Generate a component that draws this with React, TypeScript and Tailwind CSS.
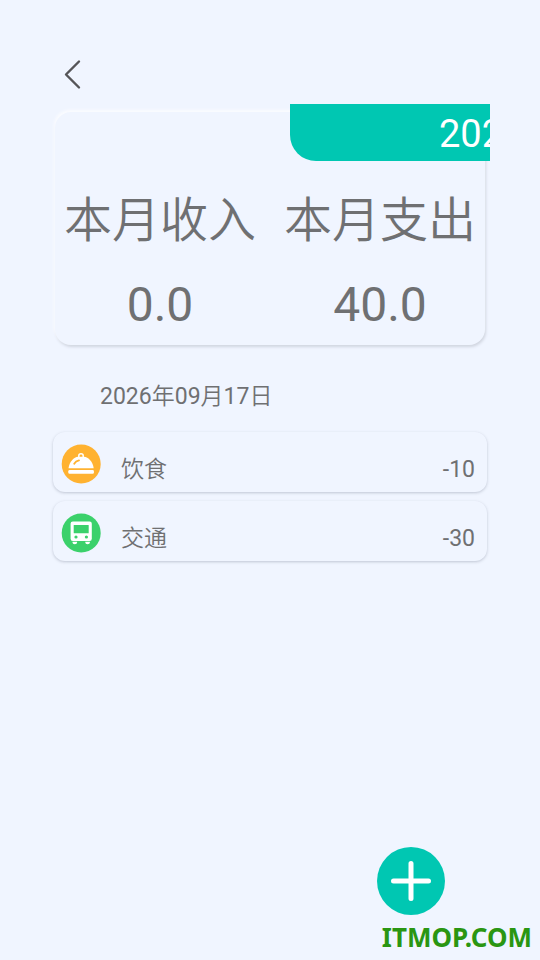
import type { ReactNode } from "react";

const fontStack = "font-['Roboto','Noto_Sans_CJK_SC_DemiLight','Noto_Sans_CJK_SC',sans-serif]";

function BackIcon() {
  return (
    <svg
      width="20"
      height="32"
      viewBox="0 0 20 32"
      fill="none"
      stroke="#555558"
      strokeWidth="2.4"
      strokeLinecap="round"
      strokeLinejoin="round"
      aria-hidden="true"
    >
      <path d="M17 3.5 4 16.5l13 13" />
    </svg>
  );
}

function FoodIcon() {
  return (
    <svg className="size-10" viewBox="0 0 40 40" aria-hidden="true">
      <circle cx="20.2" cy="20" r="19.5" fill="#ffb230" />
      <path d="M17.8 13.5v-1.7q0-2 2.2-2t2.2 2v1.7" fill="none" stroke="#fff" strokeWidth="1.5" />
      <path d="M7.5 24.3C8.3 18 13 12.8 17 12.8h6c4.4 0 8.9 5.2 9.7 11.5z" fill="#fff" />
      <path d="M13.2 19.8c1-1.8 2.6-3 4.8-3.4" fill="none" stroke="#ffb230" strokeWidth="1.8" strokeLinecap="round" />
      <rect x="7.3" y="26" width="25.6" height="3.8" rx="1.2" fill="#fff" />
    </svg>
  );
}

function BusIcon() {
  return (
    <svg className="size-10" viewBox="0 0 40 40" aria-hidden="true">
      <circle cx="20.2" cy="20" r="19.5" fill="#3bd16b" />
      <rect x="9.6" y="8.5" width="21.2" height="19.5" rx="2.2" fill="#fff" />
      <rect x="12.7" y="12" width="15" height="8.3" rx="0.5" fill="#3bd16b" />
      <circle cx="15" cy="24" r="1.6" fill="#3bd16b" />
      <circle cx="25.4" cy="24" r="1.6" fill="#3bd16b" />
      <path d="M11.5 28.8h4.6v.8a2.3 1.7 0 0 1-4.6 0zM24.3 28.8h4.6v.8a2.3 1.7 0 0 1-4.6 0z" fill="#fff" />
    </svg>
  );
}

function PlusIcon() {
  return (
    <svg width="40" height="40" viewBox="0 0 40 40" stroke="#fff" strokeWidth="5" strokeLinecap="round" aria-hidden="true">
      <path d="M20 2.5v35M2.5 20h35" />
    </svg>
  );
}

function Total({ label, value }: { label: string; value: string }) {
  return (
    <div className="flex flex-col items-center gap-7 text-5xl leading-14">
      <dt className="whitespace-nowrap">{label}</dt>
      <dd>{value}</dd>
    </div>
  );
}

function RecordRow({ icon, name, amount }: { icon: ReactNode; name: string; amount: string }) {
  return (
    <li className="flex h-15 items-center rounded-xl bg-[#f0f5ff] px-2 pt-1 shadow-[0_1px_3px_rgba(70,80,100,0.28)]">
      {icon}
      <span className="mt-3 ml-5 text-[23px] leading-8">{name}</span>
      <span className="mt-3 mr-1 ml-auto text-[23px] leading-8">{amount}</span>
    </li>
  );
}

const records = [
  { name: "饮食", amount: "-10", icon: <FoodIcon /> },
  { name: "交通", amount: "-30", icon: <BusIcon /> },
];

export default function App() {
  return (
    <div className={`flex min-h-screen flex-col bg-[#f0f5ff] text-[#6f7072] ${fontStack}`}>
      <header className="px-15 pt-14">
        <button type="button" aria-label="返回" className="flex h-9 w-6 items-center justify-center">
          <BackIcon />
        </button>
      </header>

      <main className="px-[50px] pt-3">
        <section className="grid">
          {/* raised panel behind the totals */}
          <div className="col-start-1 row-start-1 mx-[5px] mt-2 rounded-2xl bg-[#f0f5ff] shadow-[-1px_-2px_3px_#fbfcff,1px_2px_3px_#d0d5e0]" />
          <div className="col-start-1 row-start-1 pb-3">
            <button
              type="button"
              className="ml-auto flex h-[57px] w-[200px] items-center overflow-hidden rounded-bl-[26px] bg-[#00c7b2] pt-1 pl-[149px] text-[38px] whitespace-nowrap text-white"
            >
              2026
            </button>
            <dl className="mt-8 grid grid-cols-2">
              <Total label="本月收入" value="0.0" />
              <Total label="本月支出" value="40.0" />
            </dl>
          </div>
        </section>

        <h2 className="mt-[34px] ml-[50px] text-[23px] leading-9">2026年09月17日</h2>

        <ul className="mx-[3px] mt-[17px] flex flex-col gap-[9px]">
          {records.map((record) => (
            <RecordRow key={record.name} {...record} />
          ))}
        </ul>
      </main>

      <footer className="mt-auto flex flex-col items-end pt-8 pr-2 pb-2">
        <button
          type="button"
          aria-label="记一笔"
          className="mr-[87px] flex size-[68px] items-center justify-center rounded-full bg-[#00c7b2]"
        >
          <PlusIcon />
        </button>
        <p className="mt-2 font-['Noto_Sans',sans-serif] text-[26px] leading-[29px] font-bold text-[#2a9612]">ITMOP.COM</p>
      </footer>
    </div>
  );
}
